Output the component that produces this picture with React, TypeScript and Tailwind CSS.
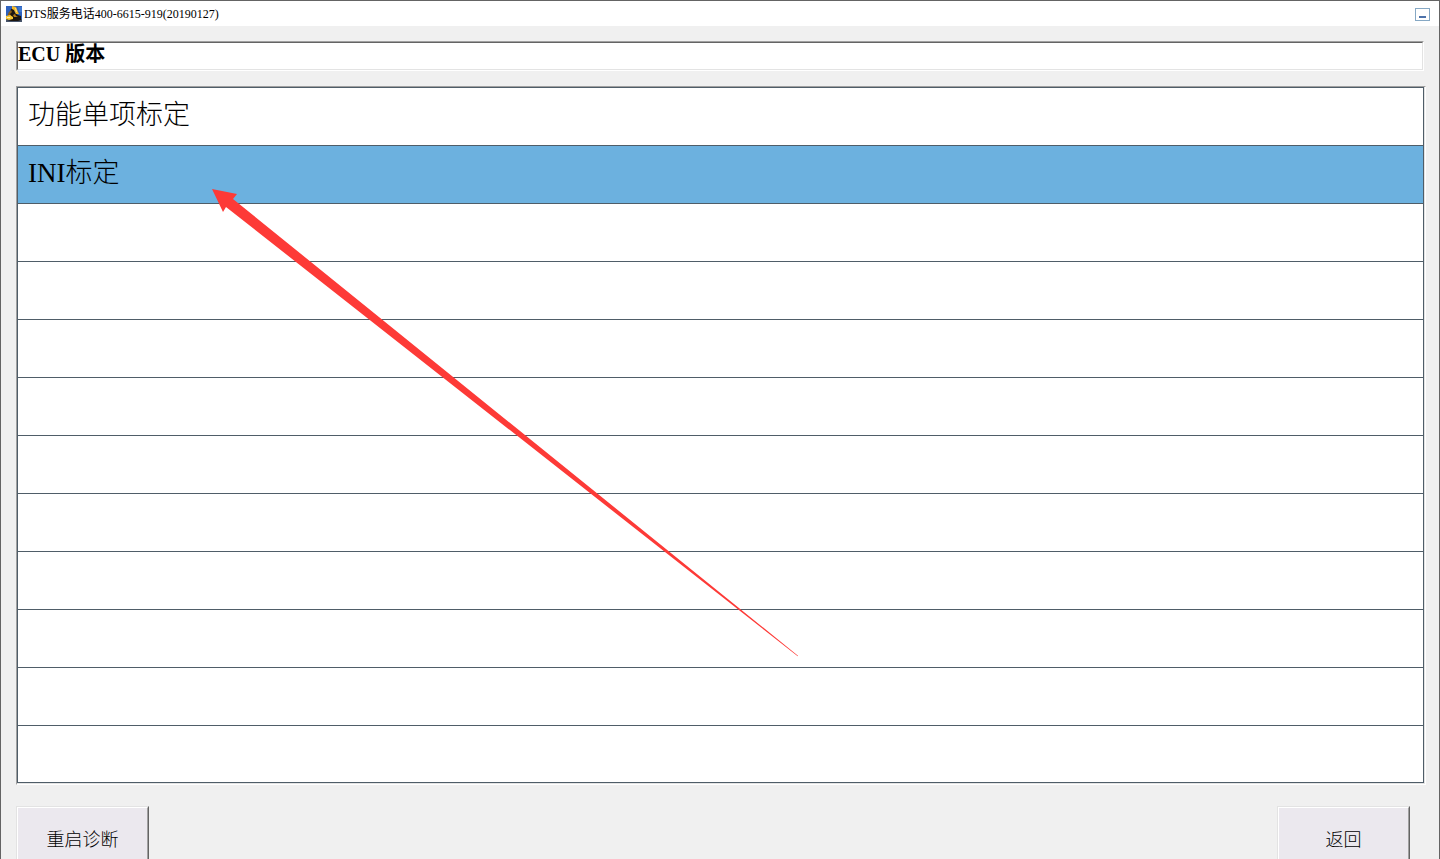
const rows = ["功能单项标定", "INI标定", "", "", "", "", "", "", "", "", "", ""];
const selected = 1;

function AppIcon() {
  return (
    <svg width="16" height="16" viewBox="0 0 16 16" aria-hidden="true" className="shrink-0">
      <rect width="16" height="16" fill="#2f62bd" />
      <path d="M12 1H16V6H13Z" fill="#3f78d0" />
      <rect y="13" width="16" height="3" fill="#48556b" />
      <path d="M5 3L8 2L9 7L12 9L15 10V14L12 15H5L1 14L3 9Z" fill="#1b150f" />
      <path d="M6 0L10 1L12 6L13 8L10 8L8 4L6 3Z" fill="#f6b923" />
      <path d="M9 2L10 2L11 6L10 6Z" fill="#fbe08a" />
      <path d="M3 6L5 4L6 6L4 8L5 10L2 10L2 8Z" fill="#8a5c14" />
      <path d="M0 10L4 9L7 11V13L3 14L0 13Z" fill="#f8c631" />
      <path d="M7 9L9 8L10 10L12 11H8Z" fill="#b57a18" />
      <path d="M1 11H4V12H1Z" fill="#fff0a8" />
    </svg>
  );
}

function ActionButton({ children }: { children: string }) {
  return (
    <button
      type="button"
      className="h-[68px] w-[133px] border border-t-[#e3e3e3] border-r-[#646464] border-b-[#646464] border-l-[#e3e3e3] bg-[#ebe8ee] text-lg"
    >
      <span className="flex h-full items-center justify-center border border-t-white border-r-[#a0a0a0] border-b-[#a0a0a0] border-l-white">
        {children}
      </span>
    </button>
  );
}

export default function App() {
  return (
    <div className="relative flex h-screen flex-col overflow-hidden border border-b-0 border-[#646464] bg-[#f0f0f0] font-['Liberation_Serif','Noto_Sans_CJK_SC',serif] font-light text-black">
      <header className="flex h-[25px] shrink-0 items-center justify-between bg-white pt-px pr-[9px] pl-[5px]">
        <h1 className="flex items-center gap-[2px] text-xs font-normal">
          <AppIcon />
          <span>DTS服务电话400-6615-919(20190127)</span>
        </h1>
        <button
          type="button"
          aria-label="最小化"
          className="flex h-[13px] w-[15px] items-end justify-center border border-[#86a8c4] bg-white pb-[2px]"
        >
          <span className="h-[2px] w-[7px] bg-[#4d72aa]" />
        </button>
      </header>

      <main className="flex shrink-0 flex-col px-[15px] pt-[15px]">
        <div className="border border-t-[#a0a0a0] border-r-white border-b-white border-l-[#a0a0a0]">
          <input
            readOnly
            aria-label="标题"
            value="ECU 版本"
            className="block h-7 w-full border border-t-[#646464] border-r-[#e3e3e3] border-b-[#e3e3e3] border-l-[#646464] bg-white pb-1 text-xl font-bold outline-none"
          />
        </div>

        <div className="mt-[15px] -mr-[2px] border border-t-[#a0a0a0] border-r-white border-b-white border-l-[#a0a0a0]">
          <div className="border-r border-b border-[#e3e3e3]">
            <ul role="listbox" aria-label="标定" className="border border-[#4f5d68]">
              {rows.map((label, i) => (
                <li
                  key={i}
                  role="option"
                  aria-selected={i === selected}
                  className={
                    "flex h-[58px] items-center border-b border-[#4f5d68] px-[10px] pb-[2px] text-[27px] last:h-14 last:border-b-0 " +
                    (i === selected ? "bg-[#6cb1df]" : "bg-white")
                  }
                >
                  {label}
                </li>
              ))}
            </ul>
          </div>
        </div>

        <div className="mt-[21px] mr-[14px] flex justify-between">
          <ActionButton>重启诊断</ActionButton>
          <ActionButton>返回</ActionButton>
        </div>
      </main>

      <svg
        width="588"
        height="469"
        viewBox="0 0 588 469"
        aria-hidden="true"
        className="pointer-events-none absolute top-[187px] left-[210px]"
      >
        <path d="M1 1L26 6L22 11L587 467.7L586.7 468.3L15 19L12 24Z" fill="#fd3a37" />
      </svg>
    </div>
  );
}
